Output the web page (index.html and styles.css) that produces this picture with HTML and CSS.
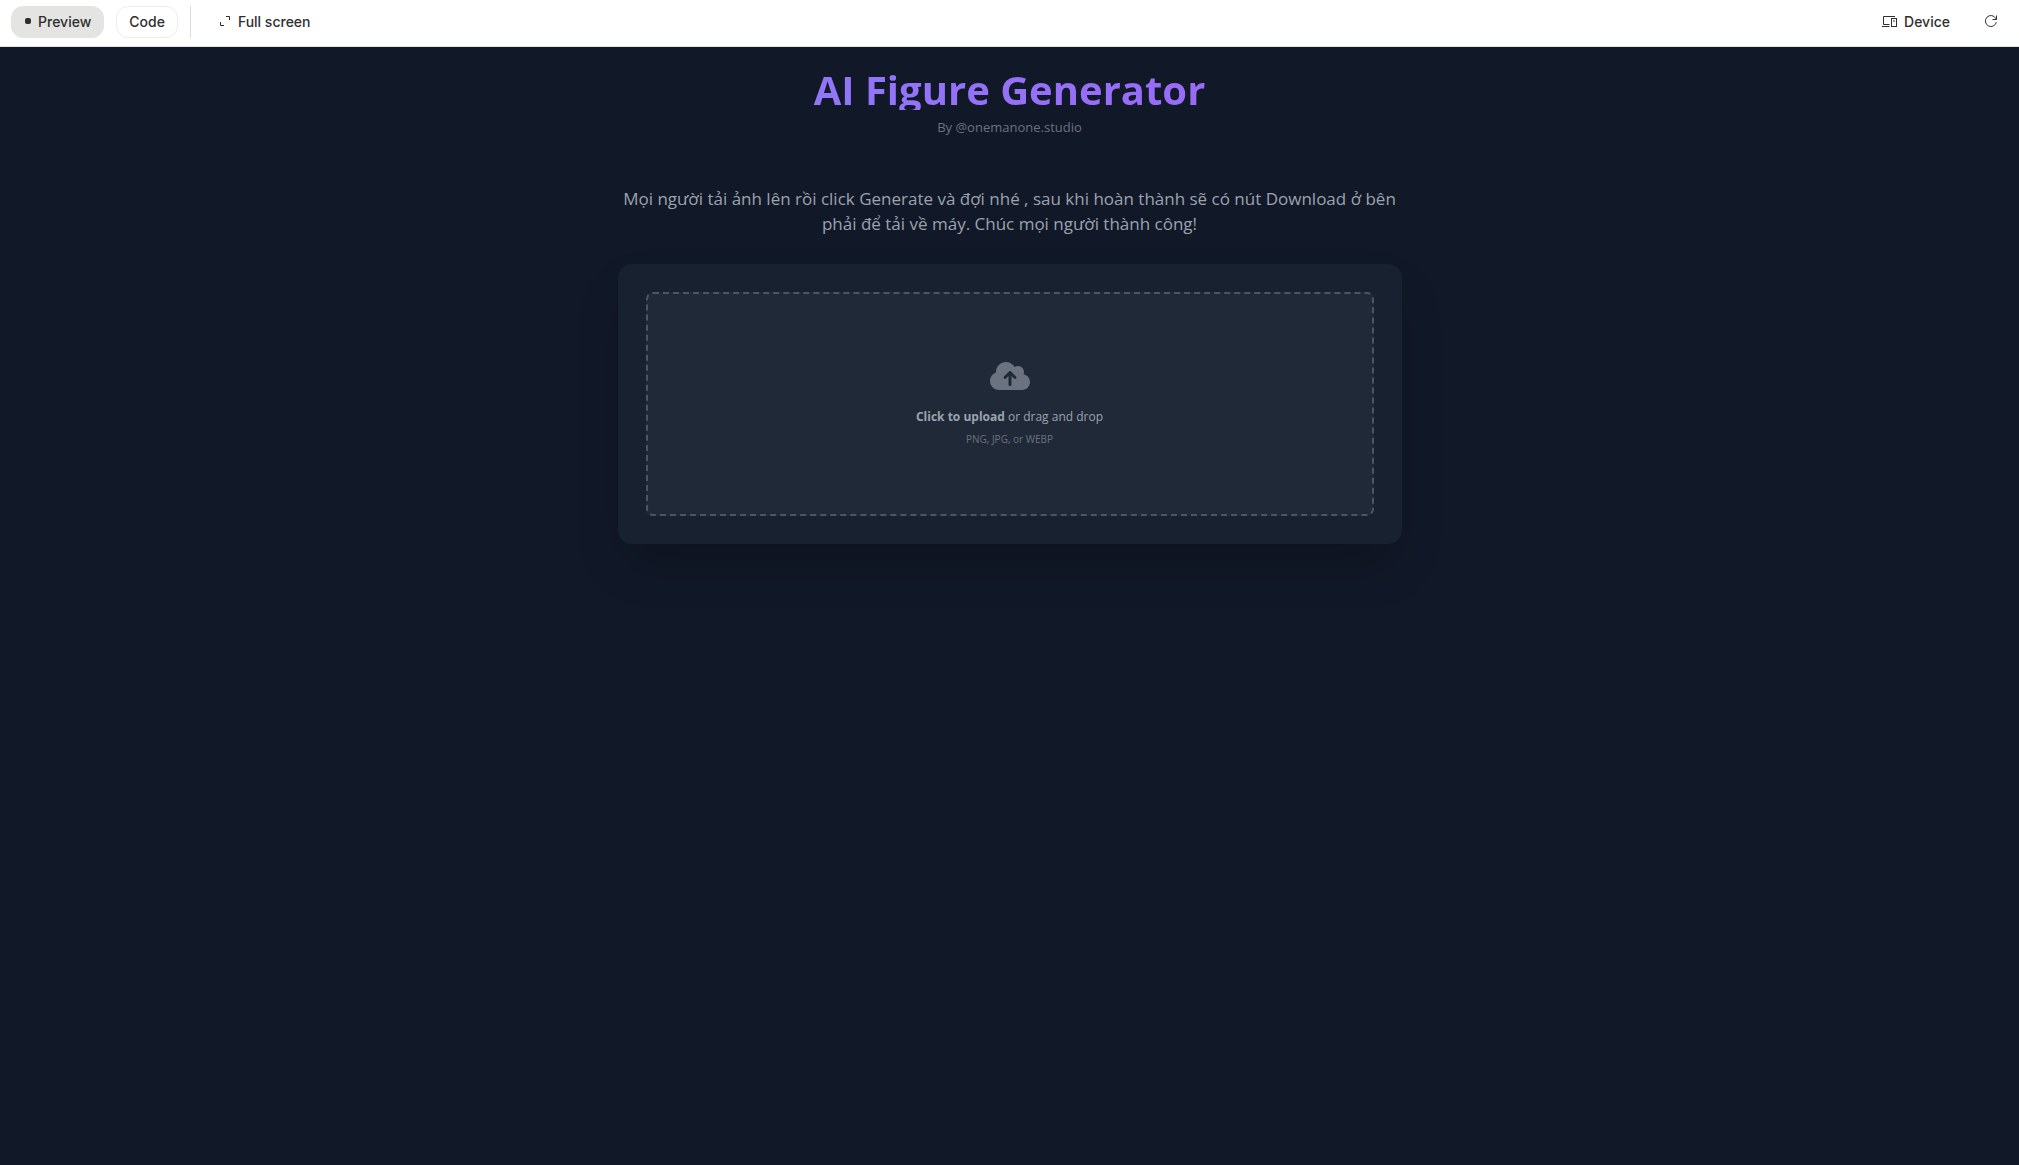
FILE: index.html
```html
<!DOCTYPE html>
<html lang="vi">
<head>
  <meta charset="UTF-8" />
  <meta name="viewport" content="width=device-width, initial-scale=1.0" />
  <title>AI Figure Generator</title>
  <link rel="stylesheet" href="styles.css">
</head>
<body>
  <header class="toolbar">
    <div class="toolbar-group">
      <button class="tab tab-active" type="button"><span class="dot"></span>Preview</button>
      <button class="tab" type="button">Code</button>
      <span class="divider"></span>
      <button class="tool" type="button">
        <svg width="12" height="12" viewBox="0 0 12 12" fill="none" stroke="currentColor" aria-hidden="true">
          <path d="M7 1.500h3.500v3.500M1.500 7v3.500h3.500" />
        </svg>
        Full screen
      </button>
    </div>
    <div class="toolbar-group toolbar-right">
      <button class="tool" type="button">
        <svg width="15" height="13" viewBox="0 0 15 13" fill="none" stroke="currentColor" aria-hidden="true">
          <path d="M13 1.500H1.500v8M0 11.500h7.500M1.500 9.500h6" />
          <rect x="9.500" y="3.500" width="5" height="8" />
          <path d="M12 5v2" />
        </svg>
        Device
      </button>
      <button class="tool tool-icon" type="button" aria-label="Reload">
        <svg width="14" height="14" viewBox="0 0 14 14" fill="none" stroke="currentColor" aria-hidden="true">
          <path d="M12.300 8.200A5.500 5.500 0 1 1 11.700 4.300L12.500 5.500M12.500 1.500v4H8.500" />
        </svg>
      </button>
    </div>
  </header>

  <main class="page">
    <h1>AI Figure Generator</h1>
    <p class="byline">By @onemanone.studio</p>
    <p class="intro">Mọi người tải ảnh lên rồi click Generate và đợi nhé , sau khi hoàn thành sẽ có nút Download ở bên phải để tải về máy. Chúc mọi người thành công!</p>

    <div class="card">
      <label class="dropzone" for="upload">
        <svg class="cloud" viewBox="0 0 640 512" fill="currentColor" aria-hidden="true">
          <path d="M144 480C64.500 480 0 415.500 0 336c0-62.800 40.200-116.200 96.200-135.900c-.1-2.700-.2-5.400-.2-8.100c0-88.400 71.600-160 160-160c59.300 0 111 32.200 138.700 80.200C409.900 102 428.300 96 448 96c53 0 96 43 96 96c0 12.200-2.300 23.800-6.400 34.600C596 238.400 640 290.100 640 352c0 70.700-57.300 128-128 128H144zm79-217c-9.400 9.400-9.400 24.600 0 33.900s24.600 9.400 33.900 0l39-39V392c0 13.300 10.700 24 24 24s24-10.700 24-24V257.900l39 39c9.400 9.400 24.600 9.400 33.900 0s9.400-24.600 0-33.900l-80-80c-9.400-9.400-24.600-9.400-33.900 0l-80 80z" />
        </svg>
        <span class="upload-text"><strong>Click to upload</strong> or drag and drop</span>
        <span class="upload-hint">PNG, JPG, or WEBP</span>
        <input class="file-input" id="upload" type="file" accept="image/png,image/jpeg,image/webp" />
      </label>
    </div>
  </main>
</body>
</html>
```

FILE: styles.css
```css
* {
  box-sizing: border-box;
}
body {
  display: flex;
  flex-direction: column;
  min-height: 100vh;
  margin: 0;
  background: #111827;
  font-family: "Open Sans", "Noto Sans", sans-serif;
}
h1, p {
  margin: 0;
}

/* Toolbar */
.toolbar {
  display: flex;
  justify-content: space-between;
  padding: 6px 11px 8px;
  background: #fff;
  border-bottom: 1px solid #e0e0de;
}
.toolbar-group {
  display: flex;
  align-items: center;
  gap: 12px;
}
button {
  display: flex;
  align-items: center;
  height: 32px;
  font: 500 14px Inter, sans-serif;
  color: #2f2f2d;
  cursor: pointer;
}
.tab {
  padding: 0 12px 2px;
  background: #fff;
  border: 1px solid #ededeb;
  border-radius: 12px;
}
.tab-active {
  gap: 7px;
  padding: 0 12px 2px 13px;
  background: #e4e4e2;
  border-color: #e4e4e2;
}
.dot {
  width: 6px;
  height: 6px;
  border-radius: 2px;
  background: #2f2f2d;
}
.divider {
  width: 1px;
  height: 32px;
  background: #deddda;
}
.tool {
  gap: 7px;
  padding: 0 16px 2px;
  background: none;
  border: none;
}
.toolbar-right {
  gap: 8px;
}
.tool-icon {
  padding: 0 10px 2px;
}

/* Generator */
.page {
  display: flex;
  flex-direction: column;
  align-items: center;
  padding: 21px 28px;
  text-align: center;
}
h1 {
  align-self: stretch;
  padding-top: 2px;
  font-size: 40px;
  font-weight: 700;
  line-height: 40px;
  color: transparent;
  background: linear-gradient(to right, #818cf8, #a855f7);
  background-clip: text;
  -webkit-background-clip: text;
}
.byline {
  margin-top: 7px;
  font-size: 13px;
  line-height: 21px;
  color: #6b7280;
}
.intro {
  max-width: 784px;
  margin-top: 48px;
  font-size: 17px;
  line-height: 25px;
  color: #9ca3af;
}
.card {
  width: 100%;
  max-width: 784px;
  margin-top: 28px;
  padding: 28px;
  background: #18212f;
  border-radius: 14px;
  box-shadow: 0 25px 50px -12px rgba(0, 0, 0, 0.25);
}
.dropzone {
  display: flex;
  flex-direction: column;
  align-items: center;
  justify-content: center;
  height: 224px;
  padding-bottom: 2px;
  border: 2px dashed #4b5563;
  border-radius: 7px;
  background: #202937;
  cursor: pointer;
}
.cloud {
  width: 40px;
  height: 32px;
  margin-bottom: 16px;
  color: #6b7280;
}
.upload-text {
  margin-bottom: 6px;
  font-size: 12px;
  line-height: 18px;
  color: #9ca3af;
}
.upload-hint {
  font-size: 10px;
  line-height: 14px;
  color: #6b7280;
}
.file-input {
  display: none;
}
```
